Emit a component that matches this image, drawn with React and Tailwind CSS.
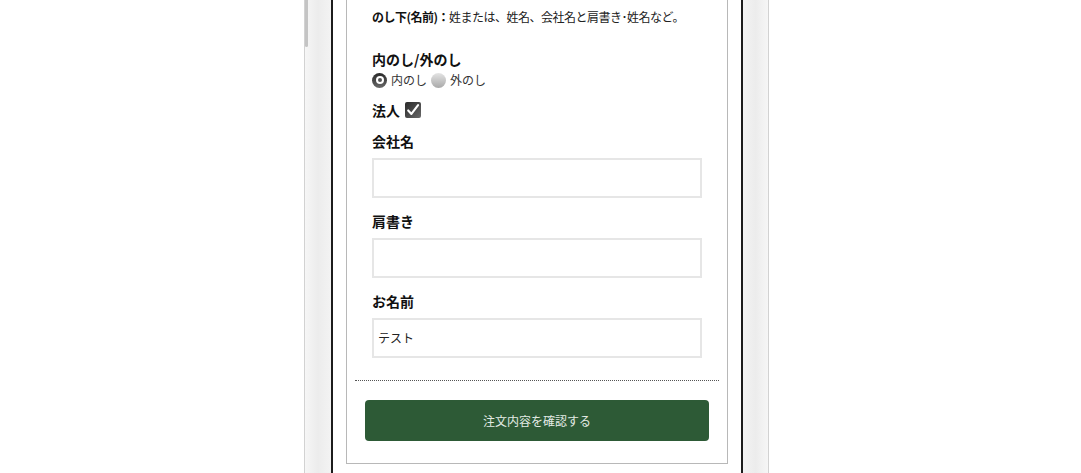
import React from 'react';

const jp = { fontFamily: '"Noto Sans CJK JP", "Noto Sans", sans-serif' };

const Radio = ({ checked }) =>
  checked ? (
    <span className="inline-flex w-[15px] h-[15px] rounded-full bg-gradient-to-b from-[#2a2a2a] to-[#6a6a6a] items-center justify-center">
      <span className="w-[8px] h-[8px] rounded-full bg-white flex items-center justify-center">
        <span className="w-[4px] h-[4px] rounded-full bg-[#555]" />
      </span>
    </span>
  ) : (
    <span className="inline-block w-[15px] h-[15px] rounded-full bg-gradient-to-b from-[#e4e4e4] to-[#a9a9a9]" />
  );

const Field = ({ label, value, className }) => (
  <div className={className}>
    <div className="h-[20px] leading-[20px] text-[14px] font-bold text-[#111]">{label}</div>
    <div className="mt-[7px] h-[40px] border-2 border-[#e6e6e6] bg-white flex items-center px-[4px] text-[12px] text-[#222]">
      {value}
    </div>
  </div>
);

export default function App() {
  return (
    <div className="h-[473px] overflow-hidden bg-white" style={jp}>
      <div className="ml-[304px] w-[465px] h-full flex relative">
        {/* side button */}
        <div className="absolute left-[1px] top-0 w-[3px] h-[47px] bg-[#c4c4c4] rounded-b-sm" />
        {/* left bezel */}
        <div className="w-[27px] h-full border-l border-[#d2d2d2] bg-gradient-to-r from-[#f6f6f6] via-[#ececec] to-[#f3f3f3]" />
        {/* screen */}
        <div className="flex-1 h-full border-x-2 border-[#1c1c1c] bg-white px-[12px] flex">
          <div className="flex-1 ml-[1px] h-[464px] border-x border-b border-[#b8b8b8] bg-white">
            <div className="px-[25px] pt-[8px]">
              <p className="h-[18px] leading-[18px] text-[12px] text-[#222] whitespace-nowrap tracking-[-0.5px]">
                <span className="font-bold text-[#111]">のし下(名前)：</span>姓または、姓名、会社名と肩書き･姓名など。
              </p>

              <div className="mt-[23px] h-[20px] leading-[20px] text-[14px] font-bold text-[#111]">内のし/外のし</div>
              <div className="mt-[2px] h-[18px] flex items-center gap-[4px] text-[12px] text-[#333]">
                <Radio checked />
                <span>内のし</span>
                <Radio />
                <span>外のし</span>
              </div>

              <div className="mt-[11px] h-[20px] flex items-center gap-[5px]">
                <span className="text-[14px] font-bold text-[#111]">法人</span>
                <span className="w-[16px] h-[16px] bg-gradient-to-br from-[#2a2a2a] to-[#6a6a6a] rounded-[2px] flex items-center justify-center">
                  <svg width="14" height="14" viewBox="0 0 16 16">
                    <path d="M2.5 8.5 L6.2 12.5 L13.8 2.5" fill="none" stroke="#fff" strokeWidth="2.4" strokeLinecap="round" strokeLinejoin="round" />
                  </svg>
                </span>
              </div>

              <Field label="会社名" className="mt-[11px]" />
              <Field label="肩書き" className="mt-[13px]" />
              <Field label="お名前" value="テスト" className="mt-[13px]" />
            </div>

            <div className="mx-[8px] mt-[22px] border-t border-dotted border-[#555]" />

            <div className="mx-[18px] mt-[19px] h-[41px] rounded-[4px] bg-[#2d5a36] flex items-center justify-center text-[12px] text-[#e3ebe5]">
              注文内容を確認する
            </div>
          </div>
          <div className="w-[1px]" />
        </div>
        {/* right bezel */}
        <div className="w-[26px] h-full border-r border-[#d2d2d2] bg-gradient-to-r from-[#f3f3f3] via-[#ececec] to-[#f6f6f6]" />
      </div>
    </div>
  );
}
